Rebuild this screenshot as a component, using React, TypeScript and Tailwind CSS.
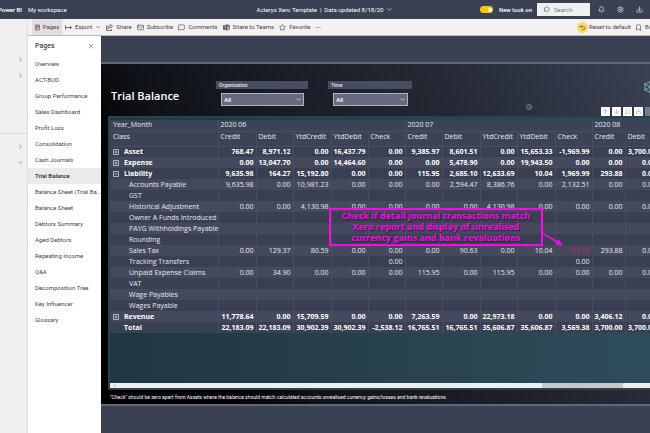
import type { ReactNode } from 'react';
import {
  ArrowDown,
  ArrowUp,
  Bell,
  Bookmark,
  ChevronDown,
  ChevronRight,
  Download,
  Info,
  Mail,
  MessageSquare,
  Search,
  Settings,
  Star,
  Undo2,
  X,
} from 'lucide-react';

const PAGES = [
  'Overview',
  'ACT-BUD',
  'Group Performance',
  'Sales Dashboard',
  'Profit Loss',
  'Consolidation',
  'Cash Journals',
  'Trial Balance',
  'Balance Sheet (Trial Balance)',
  'Balance Sheet',
  'Debtors Summary',
  'Aged Debtors',
  'Repeating Income',
  'Q&A',
  'Decomposition Tree',
  'Key Influencer',
  'Glossary',
];

const MONTHS = [
  { name: '2020 06', columns: ['Credit', 'Debit', 'YtdCredit', 'YtdDebit', 'Check'] },
  { name: '2020 07', columns: ['Credit', 'Debit', 'YtdCredit', 'YtdDebit', 'Check'] },
  { name: '2020 08', columns: ['Credit', 'Debit'] },
];

interface Row {
  name: string;
  kind: 'closed' | 'open' | 'total' | 'child';
  values: string[];
}

const BLANK = Array<string>(12).fill('');

const ROWS: Row[] = [
  { name: 'Asset', kind: 'closed', values: ['768.47', '8,971.12', '0.00', '16,437.79', '0.00', '9,385.97', '8,601.51', '0.00', '15,653.33', '-1,969.99', '0.00', '3,700.00'] },
  { name: 'Expense', kind: 'closed', values: ['0.00', '13,047.70', '0.00', '14,464.60', '0.00', '0.00', '5,478.90', '0.00', '19,943.50', '0.00', '0.00', '0.00'] },
  { name: 'Liability', kind: 'open', values: ['9,635.98', '164.27', '15,192.80', '0.00', '0.00', '115.95', '2,685.10', '12,633.69', '10.04', '1,969.99', '293.88', '0.00'] },
  { name: 'Accounts Payable', kind: 'child', values: ['9,635.98', '0.00', '10,981.23', '0.00', '0.00', '0.00', '2,594.47', '8,386.76', '0.00', '2,132.51', '0.00', '0.00'] },
  { name: 'GST', kind: 'child', values: BLANK },
  { name: 'Historical Adjustment', kind: 'child', values: ['0.00', '0.00', '4,130.98', '0.00', '0.00', '0.00', '0.00', '4,130.98', '0.00', '0.00', '0.00', '0.00'] },
  { name: 'Owner A Funds Introduced', kind: 'child', values: BLANK },
  { name: 'PAYG Withholdings Payable', kind: 'child', values: BLANK },
  { name: 'Rounding', kind: 'child', values: BLANK },
  { name: 'Sales Tax', kind: 'child', values: ['0.00', '129.37', '80.59', '0.00', '0.00', '0.00', '90.63', '0.00', '10.04', '-162.52', '293.88', '0.00'] },
  { name: 'Tracking Transfers', kind: 'child', values: ['', '', '', '', '0.00', '', '', '', '', '0.00', '', ''] },
  { name: 'Unpaid Expense Claims', kind: 'child', values: ['0.00', '34.90', '0.00', '0.00', '0.00', '115.95', '0.00', '115.95', '0.00', '0.00', '0.00', '0.00'] },
  { name: 'VAT', kind: 'child', values: BLANK },
  { name: 'Wage Payables', kind: 'child', values: BLANK },
  { name: 'Wages Payable', kind: 'child', values: BLANK },
  { name: 'Revenue', kind: 'closed', values: ['11,778.64', '0.00', '15,709.59', '0.00', '0.00', '7,263.59', '0.00', '22,973.18', '0.00', '0.00', '3,406.12', '0.00'] },
  { name: 'Total', kind: 'total', values: ['22,183.09', '22,183.09', '30,902.39', '30,902.39', '-2,538.12', '16,765.51', '16,765.51', '35,606.87', '35,606.87', '3,569.38', '3,700.00', '3,700.00'] },
];

function ExportIcon() {
  return (
    <svg viewBox="0 0 14 10" className="h-[5px] w-[7px]" fill="none" stroke="currentColor" strokeWidth="1.5">
      <path d="M1 1v8M1 5h12M10 2l3 3-3 3" />
    </svg>
  );
}

function PagesIcon() {
  return (
    <svg viewBox="0 0 12 14" className="h-[7px] w-[5px]" fill="none" stroke="#6b4a5c" strokeWidth="1.6">
      <path d="M1 1h10v12H1zM4 1v12M4 4h7M4 7h7" />
    </svg>
  );
}

function ShareIcon() {
  return (
    <svg viewBox="0 0 14 14" className="size-[7px]" fill="none" stroke="currentColor" strokeWidth="1.4">
      <path d="M4 4H1v9h10v-3M9 1l4 3.500L9 8V6C6 6 5 8 4 10c0-4 2-6.500 5-7z" />
    </svg>
  );
}

function TeamsIcon() {
  return (
    <svg viewBox="0 0 16 16" className="size-[7px]" fill="none" stroke="currentColor" strokeWidth="1.4">
      <rect x="1" y="4" width="8" height="8" fill="currentColor" />
      <path d="M3 6.500h4M5 6.500v4" stroke="#fff" />
      <circle cx="9" cy="2.500" r="1.800" />
      <circle cx="13.500" cy="3.500" r="1.300" />
      <path d="M10 6h5v5a3 3 0 0 1-3 3H6M12 6v6" />
    </svg>
  );
}

function HexLogo() {
  return (
    <svg viewBox="0 0 24 24" className="size-3 shrink-0 text-[#74a9b0]" fill="none" stroke="currentColor" strokeWidth="2">
      <path d="M12 1l10 5.500v11L12 23 2 17.500v-11zM2 6.500l10 5.500 10-5.500M12 12v11M2 17.500L12 12l10 5.500M12 1v11" />
      <circle cx="2.500" cy="6.500" r="1.500" />
      <circle cx="2.500" cy="17.500" r="1.500" />
    </svg>
  );
}

function ToolButton({ icon, label, className = '' }: { icon: ReactNode; label: string; className?: string }) {
  return (
    <button type="button" className={`flex h-full shrink-0 items-center gap-[3px] whitespace-nowrap ${className}`}>
      {icon}
      {label}
    </button>
  );
}

function Header() {
  return (
    <header className="flex h-[19px] items-center bg-[#3a4153] text-white">
      <div className="flex flex-1 items-center gap-[6px]">
        <div className="flex w-[22px] justify-end overflow-hidden whitespace-nowrap font-semibold">Power BI</div>
        <a href="#workspace">My workspace</a>
      </div>
      <button type="button" className="flex items-center gap-[3px] whitespace-nowrap">
        <span>Acterys Xero Template</span>
        <span>|</span>
        <span>Data updated 8/18/20</span>
        <ChevronDown className="size-[7px]" />
      </button>
      <div className="flex flex-1 items-center justify-end">
        <label className="flex items-center gap-[6px] whitespace-nowrap font-medium">
          <input type="checkbox" defaultChecked className="peer sr-only" />
          <span className="flex h-[7px] w-[13px] items-center justify-end rounded-full bg-[#f2c811] p-px">
            <span className="size-[4px] rounded-full bg-white" />
          </span>
          New look on
        </label>
        <label className="ml-[5px] flex h-[13px] w-[53px] items-center gap-1 bg-[#eef0f2] pl-[6px] text-[#555]">
          <Search className="size-[7px] shrink-0 -scale-x-100" />
          <input type="search" aria-label="Search" placeholder="Search" className="w-full min-w-0 bg-transparent placeholder:text-[#777]" />
        </label>
        <div className="mr-[7px] ml-2 flex items-center gap-3">
          <button type="button" aria-label="Notifications"><Bell className="size-[7px]" /></button>
          <button type="button" aria-label="Settings"><Settings className="size-[7px]" /></button>
          <button type="button" aria-label="Download"><Download className="size-[7px]" /></button>
        </div>
      </div>
    </header>
  );
}

function Toolbar() {
  return (
    <div className="flex h-[17px] items-center border-b border-[#b9bbc2] bg-[#f3f2f1] pl-1 text-[#444]">
      <ToolButton icon={<PagesIcon />} label="Pages" className="mr-[3px] w-[30px] justify-center bg-[#e1dfdd]" />
      <div className="flex h-full items-center gap-[5px]">
        <ToolButton icon={<ExportIcon />} label="Export" />
        <ChevronDown className="-ml-[2px] size-[6px]" />
        <ToolButton icon={<ShareIcon />} label="Share" />
        <ToolButton icon={<Mail className="size-[7px]" />} label="Subscribe" />
        <ToolButton icon={<MessageSquare className="size-[7px]" />} label="Comments" />
        <ToolButton icon={<TeamsIcon />} label="Share to Teams" />
        <ToolButton icon={<Star className="size-[7px]" />} label="Favorite" />
        <button type="button" aria-label="More options" className="font-bold">···</button>
      </div>
      <div className="ml-auto flex h-full w-[73px] items-center gap-1 overflow-hidden">
        <button type="button" className="flex shrink-0 items-center gap-px whitespace-nowrap">
          <span className="flex size-[11px] items-center justify-center rounded-full bg-[#f8dc66]">
            <Undo2 className="size-[7px]" />
          </span>
          Reset to default
        </button>
        <ToolButton icon={<Bookmark className="size-[7px]" />} label="Bookmarks" />
      </div>
    </div>
  );
}

function Rail() {
  return (
    <nav aria-label="Workspace" className="w-7 shrink-0 border-r border-[#e1dfdd] bg-[#f1f0ef] pt-8 text-[#777]">
      <div className="flex flex-col items-end border-b border-[#dddbd9] pr-[3px] pb-[50px]">
        <button type="button" aria-label="Expand favorites" className="h-4"><ChevronRight className="size-[7px]" /></button>
        <button type="button" aria-label="Expand recent" className="h-4"><ChevronRight className="size-[7px]" /></button>
      </div>
      <div className="flex flex-col items-end pt-1 pr-[3px]">
        <button type="button" aria-label="Expand workspaces" className="h-4"><ChevronRight className="size-[7px]" /></button>
        <button type="button" aria-label="Collapse my workspace" className="h-4"><ChevronDown className="size-[7px]" /></button>
      </div>
    </nav>
  );
}

function PagesPanel() {
  return (
    <nav aria-label="Pages" className="w-[73px] shrink-0 bg-white text-[#444]">
      <div className="flex h-5 items-center justify-between pr-[6px] pl-[7px]">
        <h2 className="text-[7px] font-medium">Pages</h2>
        <button type="button" aria-label="Close"><X className="size-2" strokeWidth={1.5} /></button>
      </div>
      <ul>
        {PAGES.map((page) => (
          <li key={page}>
            <a
              href="#page"
              className={`block h-4 truncate pl-[7px] leading-4 ${page === 'Trial Balance' ? 'bg-[#edebe9] font-medium text-[#222]' : ''}`}
            >
              {page}
            </a>
          </li>
        ))}
      </ul>
    </nav>
  );
}

function Slicer({ id, label, className }: { id: string; label: string; className: string }) {
  return (
    <div className={className}>
      <label htmlFor={id} className="block h-2 bg-[#474e61] pl-[3px] text-[5px] leading-[8px] font-medium text-[#e4e6ea]">
        {label}
      </label>
      <div className="relative mt-1 mr-1 ml-[5px]">
        <select id={id} className="block h-[13px] w-full appearance-none border border-[#b0b4be] bg-[#666a7e] pl-[2px] font-medium text-white">
          <option>All</option>
        </select>
        <ChevronDown className="pointer-events-none absolute top-[3px] right-[2px] size-[7px] text-white" />
      </div>
    </div>
  );
}

function ExpandIcon({ open }: { open: boolean }) {
  return (
    <svg viewBox="0 0 12 12" className="size-[6px]" fill="none" stroke="#d5d8de" strokeWidth="1.500">
      <path d="M1 1h10v10H1zM3 6h6" />
      {!open && <path d="M6 3v6" />}
    </svg>
  );
}

function Matrix() {
  return (
    <table className="w-[549px] table-fixed border-collapse font-['Open_Sans',sans-serif] text-[7px] leading-[10px] text-[#e8eaee]">
      <colgroup>
        <col className="w-[108px]" />
        <col className="w-[38px]" />
        <col className="w-[37px]" />
        <col className="w-[38px]" />
        <col className="w-[37px]" />
        <col className="w-[37px]" />
        <col className="w-[37px]" />
        <col className="w-[38px]" />
        <col className="w-[37px]" />
        <col className="w-[38px]" />
        <col className="w-[37px]" />
        <col className="w-[33px]" />
        <col />
      </colgroup>
      <thead className="bg-[#3c4356] text-left">
        <tr className="h-[11px] border-b border-[#474e60]">
          <th className="border-r border-[#474e60] p-0 pl-[3px] font-normal">Year_Month</th>
          {MONTHS.map((month) => (
            <th key={month.name} colSpan={month.columns.length} className="border-r border-[#474e60] p-0 pl-[2px] font-normal">
              {month.name}
            </th>
          ))}
        </tr>
        <tr className="h-[15px] border-b border-[#474e60] align-top">
          <th className="border-r border-[#474e60] p-0 pl-[3px] font-normal">Class</th>
          {MONTHS.map((month) =>
            month.columns.map((column) => (
              <th key={month.name + column} className="border-r border-[#474e60] p-0 pl-[2px] font-normal">
                {column}
              </th>
            )),
          )}
        </tr>
      </thead>
      <tbody>
        {ROWS.map((row) => (
          <tr key={row.name} className={`h-[11px] odd:bg-[#394052] even:bg-[#45495d] ${row.kind === 'child' ? 'font-normal' : 'font-bold text-white'}`}>
            <th className={`border-r border-[#474e60] p-0 text-left whitespace-nowrap ${row.kind === 'child' ? 'font-normal' : 'font-bold'}`}>
              <div className={`flex items-center ${row.kind === 'child' ? 'pl-[19px]' : 'pl-[3px]'}`}>
                {row.kind !== 'child' && (
                  <span className="w-[11px]">
                    {row.kind !== 'total' && (
                      <button type="button" aria-label={`Toggle ${row.name}`} className="block">
                        <ExpandIcon open={row.kind === 'open'} />
                      </button>
                    )}
                  </span>
                )}
                {row.name}
              </div>
            </th>
            {row.values.map((value, i) => (
              <td
                key={i}
                className={`border-r border-[#474e60] p-0 pr-[2px] text-right whitespace-nowrap ${value === '-162.52' ? 'text-[#c22a50]' : ''}`}
              >
                {value}
              </td>
            ))}
          </tr>
        ))}
      </tbody>
    </table>
  );
}

function Callout() {
  return (
    <div className="absolute top-[90px] left-[219px] w-[214px] border-2 border-[#fa0ae8] pb-px text-center font-['Open_Sans',sans-serif] text-[9px] leading-[11px] font-bold text-[#fa0ae8] text-shadow-[1px_1px_1px_#1c202b]">
      Check if detail journal transactions match
      <br />
      Xero report and display of unrealised
      <br />
      currency gains and bank revaluations
      <svg viewBox="0 0 22 14" className="absolute top-[22px] left-[211px] h-[14px] w-[22px]" fill="#fa0ae8" stroke="#fa0ae8">
        <path d="M0 1l16 9.500" strokeWidth="1.500" />
        <path d="M21 13.500l-7.500-1 3.200-5.200z" stroke="none" />
      </svg>
    </div>
  );
}

function Report() {
  return (
    <main className="min-w-0 flex-1 bg-[#3a4153] pt-[26px] pb-7">
      <div className="border-y-2 border-[#626978] bg-[linear-gradient(60deg,#000_18%,#0f1218_30%,#262a36_72%,#394153)]">
        <div className="flex h-[52px] items-start pt-[17px] pl-[10px]">
          <h1 className="w-[105px] pt-[7px] font-['Open_Sans',sans-serif] text-[11px] leading-4 font-semibold text-white">Trial Balance</h1>
          <Slicer id="organisation" label="Organisation" className="mr-5 w-[92px]" />
          <Slicer id="time" label="Time" className="w-[84px]" />
          <Info className="mt-[23px] ml-[114px] size-[6px] text-[#c9ccd3]" />
          <div className="ml-auto flex w-[49px] flex-col items-end self-stretch overflow-hidden">
            <div className="flex w-[6px]">
              <HexLogo />
            </div>
            <div className="mt-auto flex w-full gap-[2px] text-[#999]">
              <button type="button" aria-label="Drill up" className="flex size-[9px] shrink-0 items-center justify-center bg-white"><ArrowUp className="size-[7px]" /></button>
              <button type="button" aria-label="Drill down" className="flex size-[9px] shrink-0 items-center justify-center bg-white"><ArrowDown className="size-[7px]" /></button>
              <button type="button" aria-label="Next level" className="flex size-[9px] shrink-0 items-center justify-center bg-white text-[#ccc]">
                <svg viewBox="0 0 14 14" className="size-[7px]" fill="none" stroke="currentColor" strokeWidth="2"><path d="M4 1v11M10 1v11M2 10l2 2 2-2M8 10l2 2 2-2" /></svg>
              </button>
              <button type="button" aria-label="Expand all" className="flex size-[9px] shrink-0 items-center justify-center bg-white text-[#ccc]">
                <svg viewBox="0 0 14 14" className="size-[7px]" fill="none" stroke="currentColor" strokeWidth="2"><path d="M7 1v5M3 12V7h8v5M1 10l2 2 2-2M9 10l2 2 2-2" /></svg>
              </button>
              <button type="button" aria-label="Filters" className="size-[9px] shrink-0 bg-[#777c89]" />
            </div>
          </div>
        </div>
        <section aria-label="Trial Balance matrix" className="relative ml-[7px] border-t-2 border-b-2 border-l-2 border-[#284350] bg-linear-to-r from-[#1e3740] to-[#2e4d5b] pt-[2px]">
          <div className="h-[263px] overflow-hidden">
            <Matrix />
          </div>
          <div className="flex h-[5px] items-center bg-[#eeeeee]">
            <span className="w-[80%] pl-1 text-[5px] leading-[5px] text-[#666]">‹</span>
            <span className="h-full w-[15%] bg-[#c8c8c8]" />
          </div>
          <Callout />
        </section>
        <p className="h-[14px] truncate pl-[9px] text-[5px] leading-[14px] text-white">
          "Check" should be zero apart from Assets where the balance should match calculated accounts unrealised currency gains/losses and bank revaluations
        </p>
      </div>
    </main>
  );
}

export default function App() {
  return (
    <div className="flex min-h-screen flex-col overflow-hidden bg-[#3a4153] font-[Roboto,sans-serif] text-[6px] leading-[10px]">
      <Header />
      <div className="flex flex-1">
        <Rail />
        <div className="flex min-w-0 flex-1 flex-col">
          <Toolbar />
          <div className="flex flex-1">
            <PagesPanel />
            <Report />
          </div>
        </div>
      </div>
    </div>
  );
}
